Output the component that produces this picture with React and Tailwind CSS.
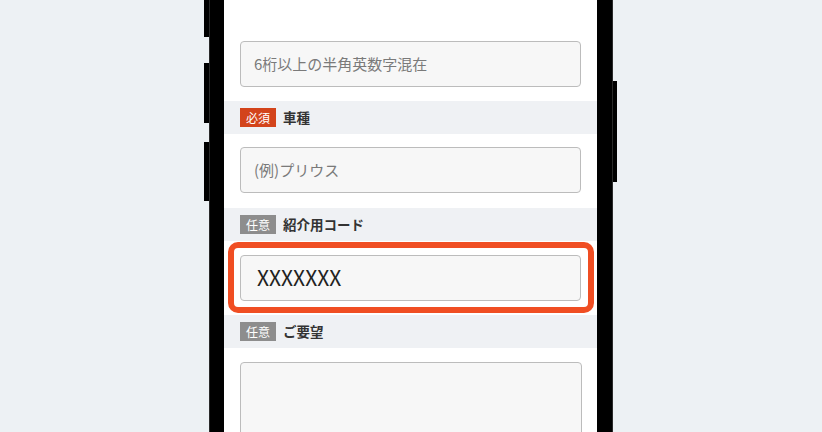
import React from 'react';

const jp = { fontFamily: '"Noto Sans CJK JP", "Noto Sans", sans-serif' };

function Badge({ required }) {
  return (
    <span
      className={
        'flex h-[19px] w-[36px] items-center justify-center text-[12px] leading-none text-white ' +
        (required ? 'bg-[#d3441b]' : 'bg-[#8d8d8d]')
      }
    >
      {required ? '必須' : '任意'}
    </span>
  );
}

function Header({ required, label }) {
  return (
    <div className="flex h-[33px] items-center gap-[7px] bg-[#eff1f4] px-4">
      <Badge required={required} />
      <span className="text-[13.5px] font-bold text-[#333]">{label}</span>
    </div>
  );
}

function Field({ children, big }) {
  return (
    <div
      className={
        'flex h-[46px] items-center rounded-[4px] border-[1.5px] border-[#bcbcbc] bg-[#f7f7f7] ' +
        (big ? 'pl-[16px] text-[21px] text-[#222]' : 'pl-[13px] text-[15px] text-[#7a7a7a]')
      }
    >
      {children}
    </div>
  );
}

export default function App() {
  return (
    <div className="flex h-[432px] w-[822px] overflow-hidden bg-[#edf1f4] pl-[204px]" style={jp}>
      {/* left side buttons */}
      <div className="flex w-[5px] flex-col">
        <div className="h-[37px] bg-black" />
        <div className="mt-[26px] h-[60px] bg-black" />
        <div className="mt-[19px] h-[59px] bg-black" />
      </div>
      <div className="w-[15px] bg-black border-l border-[#2a2a2a]" />

      {/* screen */}
      <div className="w-[373px] bg-white">
        <div className="px-4 pt-[41px] pb-[14px]">
          <Field>6桁以上の半角英数字混在</Field>
        </div>

        <Header required label="車種" />
        <div className="px-4 pt-[13px] pb-[15px]">
          <Field>(例)プリウス</Field>
        </div>

        <Header label="紹介用コード" />
        <div className="pl-[4px] pr-[3px] pt-[1px] pb-[2px]">
          <div className="rounded-[10px] border-[6px] border-[#f04e23] pl-[6px] pr-[7px] pt-[7px] pb-[6px]">
            <Field big>XXXXXXX</Field>
          </div>
        </div>

        <Header label="ご要望" />
        <div className="pl-4 pr-[15px] pt-[14px]">
          <div className="h-[120px] rounded-[4px] border-[1.5px] border-[#bcbcbc] bg-[#f7f7f7]" />
        </div>
      </div>

      <div className="w-[16px] bg-black border-r border-[#2a2a2a]" />
      {/* right side button */}
      <div className="flex w-[4px] flex-col">
        <div className="mt-[81px] h-[101px] bg-black" />
      </div>
    </div>
  );
}
